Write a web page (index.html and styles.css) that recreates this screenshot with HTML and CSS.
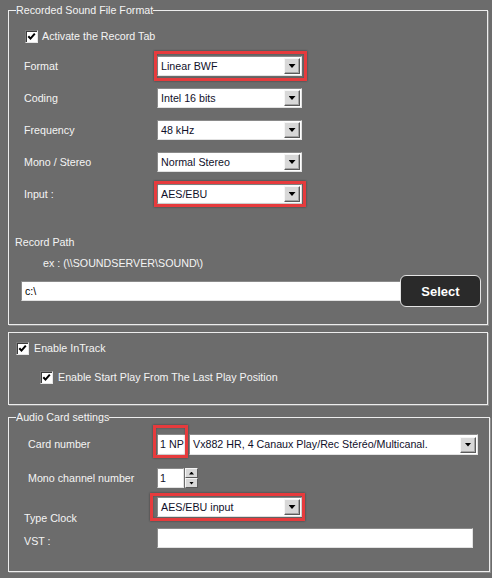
FILE: index.html
```html
<!DOCTYPE html>
<html>
<head>
<meta charset="utf-8">
<link rel="stylesheet" href="styles.css">
</head>
<body>
<fieldset class="group g1">
  <legend>Recorded Sound File Format</legend>
  <div class="check-row r-activate">
    <span class="cb"><svg viewBox="0 0 11 11" width="11" height="11"><path d="M2.3 5.2 L4.5 7.6 L8.8 2.6" fill="none" stroke="#000" stroke-width="2"/></svg></span>
    <span>Activate the Record Tab</span>
  </div>
  <div class="form">
    <div class="row">
      <span class="lbl">Format</span>
      <div class="combo hl hl-format"><span class="val">Linear BWF</span><span class="drop"></span></div>
    </div>
    <div class="row">
      <span class="lbl">Coding</span>
      <div class="combo"><span class="val">Intel 16 bits</span><span class="drop"></span></div>
    </div>
    <div class="row">
      <span class="lbl">Frequency</span>
      <div class="combo"><span class="val">48 kHz</span><span class="drop"></span></div>
    </div>
    <div class="row">
      <span class="lbl">Mono / Stereo</span>
      <div class="combo"><span class="val">Normal Stereo</span><span class="drop"></span></div>
    </div>
    <div class="row">
      <span class="lbl">Input :</span>
      <div class="combo hl hl-input"><span class="val">AES/EBU</span><span class="drop"></span></div>
    </div>
  </div>
  <div class="path-label">Record Path</div>
  <div class="path-ex">ex : (\\SOUNDSERVER\SOUND\)</div>
  <div class="path-row">
    <div class="field path-field">c:\</div>
    <div class="btn">Select</div>
  </div>
</fieldset>

<fieldset class="group g2">
  <div class="check-row r-intrack">
    <span class="cb"><svg viewBox="0 0 11 11" width="11" height="11"><path d="M2.3 5.2 L4.5 7.6 L8.8 2.6" fill="none" stroke="#000" stroke-width="2"/></svg></span>
    <span>Enable InTrack</span>
  </div>
  <div class="check-row r-lastpos">
    <span class="cb"><svg viewBox="0 0 11 11" width="11" height="11"><path d="M2.3 5.2 L4.5 7.6 L8.8 2.6" fill="none" stroke="#000" stroke-width="2"/></svg></span>
    <span>Enable Start Play From The Last Play Position</span>
  </div>
</fieldset>

<fieldset class="group g3">
  <legend>Audio Card settings</legend>
  <div class="row card-row">
    <span class="lbl lbl-in">Card number</span>
    <div class="card-ctrls">
      <div class="field np hl hl-np">1 NP</div>
      <div class="combo card-combo"><span class="val">Vx882 HR, 4 Canaux Play/Rec Stéréo/Multicanal.</span><span class="drop"></span></div>
    </div>
  </div>
  <div class="row mono-row">
    <span class="lbl lbl-in">Mono channel number</span>
    <div class="spin">
      <div class="field spin-field">1</div>
      <div class="spin-btns">
        <span class="sb up"></span>
        <span class="sb down"></span>
      </div>
    </div>
  </div>
  <div class="row low-row clock-row">
    <span class="lbl low">Type Clock</span>
    <div class="combo hl hl-clock"><span class="val">AES/EBU input</span><span class="drop"></span></div>
  </div>
  <div class="row low-row vst-row">
    <span class="lbl low vst-lbl">VST :</span>
    <div class="field vst-field"></div>
  </div>
</fieldset>
</body>
</html>
```

FILE: styles.css
```css
* {
  box-sizing: border-box;
}

html,
body {
  margin: 0;
}

body {
  width: 492px;
  height: 578px;
  overflow: hidden;
  padding-top: 4px;
  background: #6c6c6c;
  font-family: "Liberation Sans", Arial, sans-serif;
  font-size: 10.7px;
  line-height: 13px;
  color: #f4f4f4;
}

.group {
  min-width: 0;
  margin: 0 4px 0 8px;
  padding: 0 6px;
  border: 1px solid #ededed;
  box-shadow: 1px 1px 0 #8e8e8e;
}

legend {
  padding: 0;
  margin-left: 1px;
  line-height: 13px;
}

/* ---------- checkboxes ---------- */
.check-row {
  display: flex;
  align-items: center;
  height: 16px;
  gap: 5px;
}

.cb {
  display: flex;
  align-items: center;
  justify-content: center;
  width: 13px;
  height: 13px;
  background: #fff;
  border: 1px solid;
  border-color: #7c7c7c #e6e6e6 #e6e6e6 #7c7c7c;
  box-shadow: inset 1px 1px 0 #3c3c3c;
}

.r-activate {
  margin-top: 11px;
  padding-left: 10px;
  gap: 4px;
}

/* ---------- form rows ---------- */
.form {
  display: flex;
  flex-direction: column;
  gap: 12px;
  margin-top: 12px;
}

.row {
  display: grid;
  grid-template-columns: 142px auto;
  grid-template-rows: 20px;
  align-items: center;
}

.lbl {
  padding-left: 9px;
}

.lbl-in {
  padding-left: 13px;
}

.combo {
  display: flex;
  align-items: center;
  width: 145px;
  height: 20px;
  padding: 1px;
  background: #fff;
  border: 1px solid;
  border-color: #8a8a8a #e2e2e2 #e2e2e2 #8a8a8a;
  color: #10102a;
}

.val {
  flex: 1;
  padding-left: 2px;
  white-space: nowrap;
  overflow: hidden;
}

.drop {
  display: flex;
  align-items: center;
  justify-content: center;
  width: 16px;
  height: 16px;
  background: #d8d8d8;
  border: 1px solid;
  border-color: #f6f6f6 #5a5a5a #5a5a5a #f6f6f6;
  box-shadow: inset -1px -1px 0 #a4a4a4;
}

.drop::before {
  content: "";
  width: 7px;
  height: 4px;
  background: #000;
  clip-path: polygon(0 0, 100% 0, 50% 100%);
}

.field {
  height: 20px;
  background: #fff;
  border: 1px solid;
  border-color: #8a8a8a #e2e2e2 #e2e2e2 #8a8a8a;
  color: #10102a;
  padding-left: 2px;
  display: flex;
  align-items: center;
  white-space: nowrap;
}

/* ---------- red annotations ---------- */
.hl {
  position: relative;
}

.hl::after {
  content: "";
  position: absolute;
  border: 3px solid #e63b3d;
  box-shadow: 0 0 2px rgba(0, 0, 0, 0.45), inset 0 0 2px rgba(0, 0, 0, 0.35);
  pointer-events: none;
}

.hl-format::after {
  top: -6px;
  bottom: -6px;
  left: -4px;
  right: -6px;
}

.hl-input::after {
  top: -4px;
  bottom: -4px;
  left: -4px;
  right: -5px;
}

.hl-np::after {
  top: -10px;
  bottom: -4px;
  left: -5px;
  right: -2px;
}

.hl-clock::after {
  top: -5px;
  bottom: -5px;
  left: -8px;
  right: -4px;
}

/* ---------- record path ---------- */
.path-label {
  margin-top: 32px;
}

.path-ex {
  margin-top: 8px;
  padding-left: 28px;
}

.path-row {
  display: flex;
  align-items: center;
  height: 32px;
  margin-top: 5px;
  padding-left: 6px;
  margin-bottom: 17px;
}

.path-field {
  flex: 1;
  padding-left: 3px;
  color: #000;
}

.btn {
  display: flex;
  align-items: center;
  justify-content: center;
  width: 81px;
  height: 32px;
  margin-left: -2px;
  background: #2a2a2a;
  border: 1px solid #e4e4e4;
  border-radius: 6px;
  color: #fff;
  font-weight: bold;
  font-size: 13px;
  position: relative;
}

/* ---------- group 2 ---------- */
.g2 {
  margin-top: 7px;
  padding-top: 7px;
  padding-bottom: 19px;
}

.r-intrack {
  padding-left: 1px;
}

.r-lastpos {
  margin-top: 13px;
  padding-left: 25px;
}

/* ---------- group 3 ---------- */
.g3 {
  margin: 6px 2px 0 8px;
  padding-bottom: 23px;
}

.card-row {
  margin-top: 10px;
  grid-template-rows: 21px;
}

.card-ctrls {
  display: flex;
  gap: 2px;
  height: 21px;
}

.np {
  width: 30px;
  height: 21px;
}

.card-combo {
  width: 289px;
  height: 21px;
}

.mono-row {
  margin-top: 13px;
}

.spin {
  display: flex;
  gap: 1px;
}

.spin-field {
  width: 27px;
}

.spin-btns {
  display: flex;
  flex-direction: column;
  width: 13px;
  height: 20px;
}

.sb {
  flex: 1;
  display: flex;
  align-items: center;
  justify-content: center;
  background: #d8d8d8;
  border: 1px solid;
  border-color: #f6f6f6 #5a5a5a #5a5a5a #f6f6f6;
}

.sb::before {
  content: "";
  width: 5px;
  height: 3px;
  background: #000;
}

.up::before {
  clip-path: polygon(50% 0, 100% 100%, 0 100%);
}

.down::before {
  clip-path: polygon(0 0, 100% 0, 50% 100%);
}

.low-row {
  align-items: start;
}

.clock-row {
  margin-top: 9px;
}

.low {
  margin-top: 15px;
}

.vst-row {
  margin-top: 11px;
}

.vst-lbl {
  margin-top: 7px;
}

.vst-field {
  width: 316px;
}
```
